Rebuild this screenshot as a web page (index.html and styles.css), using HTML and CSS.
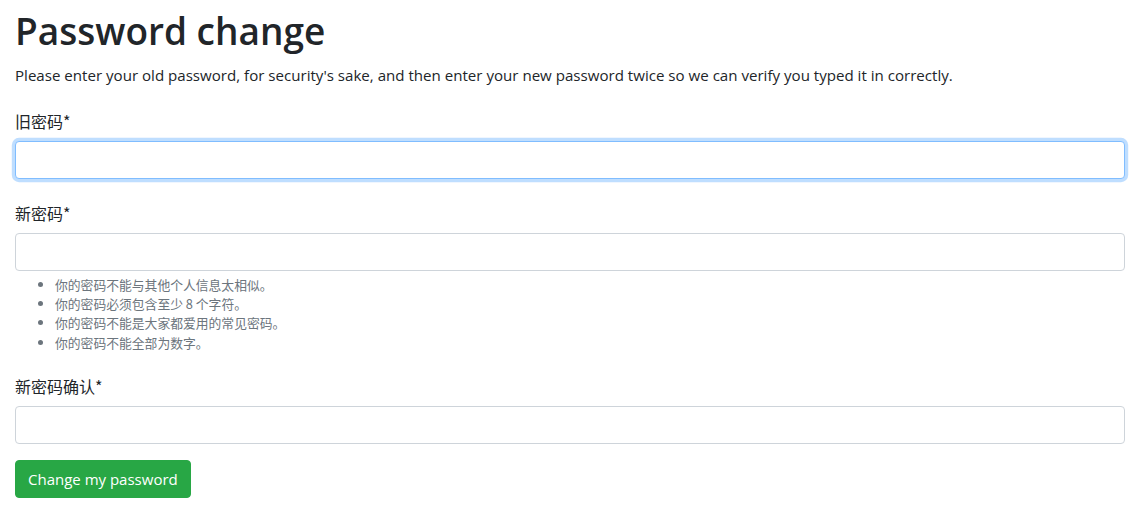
FILE: index.html
```html
<!DOCTYPE html>
<html lang="zh-Hans">
<head>
<meta charset="utf-8">
<title>Password change</title>
<link rel="stylesheet" href="styles.css">
</head>
<body>
<div class="container">
  <h1 class="title">Password change</h1>
  <p class="intro">Please enter your old password, for security's sake, and then enter your new password twice so we can verify you typed it in correctly.</p>
  <form class="form">
    <div class="field">
      <label class="label" for="old">旧密码*</label>
      <input class="input input-focus" type="password" id="old">
    </div>
    <div class="field">
      <label class="label" for="new1">新密码*</label>
      <input class="input" type="password" id="new1">
      <small class="help">
        <ul class="help-list">
          <li>你的密码不能与其他个人信息太相似。</li>
          <li>你的密码必须包含至少 8 个字符。</li>
          <li>你的密码不能是大家都爱用的常见密码。</li>
          <li>你的密码不能全部为数字。</li>
        </ul>
      </small>
    </div>
    <div class="field field-last">
      <label class="label" for="new2">新密码确认*</label>
      <input class="input" type="password" id="new2">
    </div>
    <button class="btn" type="button">Change my password</button>
  </form>
</div>
</body>
</html>
```
FILE: styles.css
```css
* { box-sizing: border-box; }
html, body { margin: 0; padding: 0; background: #fff; }
body {
  font-family: "Open Sans", "Noto Sans CJK SC", sans-serif;
  font-size: 16px;
  line-height: 24px;
  color: #212529;
}
.container {
  padding: 7px 14px 0 15px;
}
.title {
  font-size: 37px;
  line-height: 48px;
  font-weight: 600;
  margin: 0 0 8px;
}
.intro {
  margin: 0 0 22px;
  font-size: 15.1px;
}
.form { display: flex; flex-direction: column; align-items: stretch; }
.field { display: flex; flex-direction: column; margin-bottom: 22px; }
.field-last { margin-bottom: 16px; }
.label {
  display: block;
  margin-bottom: 8px;
  line-height: 24px;
  font-family: "Noto Sans CJK SC", sans-serif;
  font-size: 16px;
}
.input {
  display: block;
  width: 100%;
  height: 38px;
  padding: 6px 12px;
  font-size: 16px;
  border: 1px solid #ced4da;
  border-radius: 4px;
  background: #fff;
  outline: none;
}
.input-focus {
  border-color: #80bdff;
  box-shadow: 0 0 0 3.2px rgba(0, 123, 255, 0.25);
}
.help {
  display: block;
  margin-top: 4px;
  font-size: 12.8px;
  line-height: 19.2px;
  color: #6c757d;
  font-family: "Noto Sans CJK SC", sans-serif;
}
.help-list {
  margin: 0;
  padding-left: 40px;
}
.btn {
  align-self: flex-start;
  height: 38px;
  padding: 6px 12px;
  font-family: "Open Sans", sans-serif;
  font-size: 15px;
  line-height: 24px;
  color: #fff;
  background: #28a745;
  border: 1px solid #28a745;
  border-radius: 4px;
}
```
